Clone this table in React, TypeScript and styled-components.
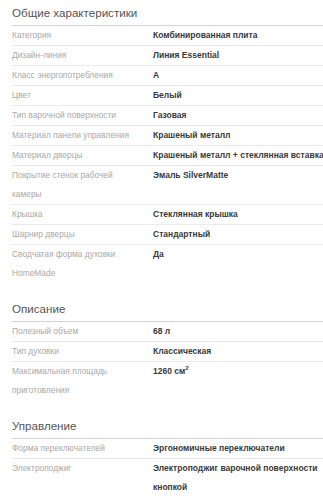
import React from 'react';
import styled, { createGlobalStyle } from 'styled-components';

interface Spec {
  label: string;
  value: React.ReactNode;
}

interface Section {
  title: string;
  specs: Spec[];
}

const sections: Section[] = [
  {
    title: 'Общие характеристики',
    specs: [
      { label: 'Категория', value: 'Комбинированная плита' },
      { label: 'Дизайн-линия', value: 'Линия Essential' },
      { label: 'Класс энергопотребления', value: 'A' },
      { label: 'Цвет', value: 'Белый' },
      { label: 'Тип варочной поверхности', value: 'Газовая' },
      { label: 'Материал панели управления', value: 'Крашеный металл' },
      { label: 'Материал дверцы', value: 'Крашеный металл + стеклянная вставка' },
      { label: 'Покрытие стенок рабочей камеры', value: 'Эмаль SilverMatte' },
      { label: 'Крышка', value: 'Стеклянная крышка' },
      { label: 'Шарнир дверцы', value: 'Стандартный' },
      { label: 'Сводчатая форма духовки HomeMade', value: 'Да' },
    ],
  },
  {
    title: 'Описание',
    specs: [
      { label: 'Полезный объем', value: '68 л' },
      { label: 'Тип духовки', value: 'Классическая' },
      { label: 'Максимальная площадь приготовления', value: <>1260 см<sup>2</sup></> },
    ],
  },
  {
    title: 'Управление',
    specs: [
      { label: 'Форма переключателей', value: 'Эргономичные переключатели' },
      { label: 'Электроподжиг', value: 'Электроподжиг варочной поверхности кнопкой' },
    ],
  },
];

const GlobalStyle = createGlobalStyle`
  html, body {
    margin: 0;
    padding: 0;
    background: #fff;
    overflow-x: hidden;
  }
  body {
    font-family: "Liberation Sans", Arial, sans-serif;
  }
`;

const Page = styled.div`
  padding: 3px 0 0 12px;
  width: 330px;
`;

const Block = styled.section`
  & + & {
    margin-top: 16px;
  }
`;

const Heading = styled.h2`
  margin: 0;
  padding-bottom: 2px;
  font-size: 11.6px;
  line-height: 20px;
  font-weight: normal;
  color: #555;
  border-bottom: 1px solid #d4d4d4;
`;

const Row = styled.div`
  display: grid;
  grid-template-columns: 141px 1fr;
  border-bottom: 1px solid #ebebeb;

  &:last-child {
    border-bottom: none;
  }
`;

const Label = styled.div`
  padding-right: 10px;
  font-size: 8.4px;
  line-height: 19px;
  color: #a9a9a9;
`;

const Value = styled.div`
  font-size: 8.5px;
  line-height: 19px;
  font-weight: bold;
  color: #3a3a3a;

  sup {
    font-size: 6px;
    line-height: 0;
  }
`;

export default function App() {
  return (
    <Page>
      <GlobalStyle />
      {sections.map(section => (
        <Block key={section.title}>
          <Heading>{section.title}</Heading>
          {section.specs.map(spec => (
            <Row key={spec.label}>
              <Label>{spec.label}</Label>
              <Value>{spec.value}</Value>
            </Row>
          ))}
        </Block>
      ))}
    </Page>
  );
}
